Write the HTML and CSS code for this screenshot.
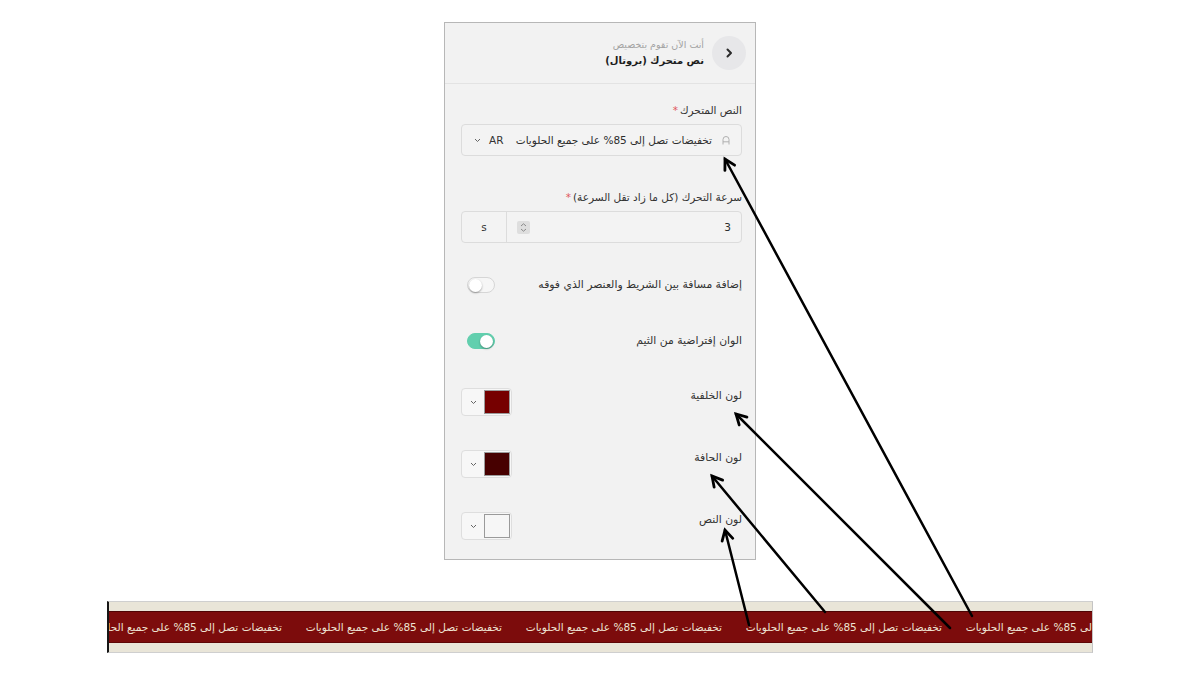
FILE: index.html
```html
<!DOCTYPE html>
<html lang="ar">
<head>
<meta charset="utf-8">
<title>نص متحرك</title>
<link rel="stylesheet" href="styles.css">
</head>
<body>
<div class="page">
  <aside class="panel" dir="rtl">
    <header class="panel-head">
      <button class="back" type="button" aria-label="رجوع">
        <svg width="12" height="12" viewBox="0 0 12 12"><path d="M4.5 2.5 L8 6 L4.5 9.5" fill="none" stroke="#2b2b2b" stroke-width="2" stroke-linecap="round" stroke-linejoin="round"/></svg>
      </button>
      <div class="head-text">
        <div class="head-sub">أنت الآن تقوم بتخصيص</div>
        <div class="head-title">نص متحرك (بروتال)</div>
      </div>
    </header>

    <div class="panel-body">
      <div class="field">
        <div class="lbl">النص المتحرك<span class="req">*</span></div>
        <div class="input">
          <svg class="a-ic" width="8" height="10" viewBox="0 0 8 10"><path d="M1 9.5 V4.5 A3 3 0 0 1 7 4.5 V9.5 M1 6.8 H7" fill="none" stroke="#b0b0b0" stroke-width="1"/></svg>
          <span class="input-val">تخفيضات تصل إلى 85% على جميع الحلويات</span>
          <span class="lang">AR
            <svg width="7" height="5" viewBox="0 0 7 5"><path d="M1 1 L3.5 3.5 L6 1" fill="none" stroke="#666" stroke-width="1"/></svg>
          </span>
        </div>
      </div>

      <div class="field f-speed">
        <div class="lbl">سرعة التحرك (كل ما زاد تقل السرعة)<span class="req">*</span></div>
        <div class="input num">
          <div class="num-main">
            <span class="num-val">3</span>
            <span class="spin">
              <svg width="13" height="13" viewBox="0 0 13 13"><path d="M4 5 L6.5 2.8 L9 5 M4 8 L6.5 10.2 L9 8" fill="none" stroke="#8a8a8a" stroke-width="1"/></svg>
            </span>
          </div>
          <div class="num-unit">s</div>
        </div>
      </div>

      <div class="row-toggle t1">
        <span class="rlbl">إضافة مسافة بين الشريط والعنصر الذي فوقه</span>
        <span class="toggle"><span class="knob"></span></span>
      </div>

      <div class="row-toggle t2">
        <span class="rlbl">الوان إفتراضية من الثيم</span>
        <span class="toggle on"><span class="knob"></span></span>
      </div>

      <div class="row-color c1">
        <span class="rlbl">لون الخلفية</span>
        <span class="picker">
          <span class="swatch" style="background:#760000"></span>
          <svg width="7" height="5" viewBox="0 0 7 5"><path d="M1 1 L3.5 3.5 L6 1" fill="none" stroke="#666" stroke-width="1"/></svg>
        </span>
      </div>

      <div class="row-color c2">
        <span class="rlbl">لون الحافة</span>
        <span class="picker">
          <span class="swatch" style="background:#470000"></span>
          <svg width="7" height="5" viewBox="0 0 7 5"><path d="M1 1 L3.5 3.5 L6 1" fill="none" stroke="#666" stroke-width="1"/></svg>
        </span>
      </div>

      <div class="row-color c3">
        <span class="rlbl">لون النص</span>
        <span class="picker">
          <span class="swatch" style="background:#f6f6f6"></span>
          <svg width="7" height="5" viewBox="0 0 7 5"><path d="M1 1 L3.5 3.5 L6 1" fill="none" stroke="#666" stroke-width="1"/></svg>
        </span>
      </div>
    </div>
  </aside>

  <section class="banner">
    <div class="band-light"></div>
    <div class="band">
      <div class="track">
        <span class="item" dir="rtl">تخفيضات تصل إلى 85% على جميع الحلويات</span>
        <span class="item" dir="rtl">تخفيضات تصل إلى 85% على جميع الحلويات</span>
        <span class="item" dir="rtl">تخفيضات تصل إلى 85% على جميع الحلويات</span>
        <span class="item" dir="rtl">تخفيضات تصل إلى 85% على جميع الحلويات</span>
        <span class="item" dir="rtl">تخفيضات تصل إلى 85% على جميع الحلويات</span>
      </div>
    </div>
    <div class="band-light"></div>
  </section>
</div>

<svg class="arrows" width="1200" height="675" viewBox="0 0 1200 675">
  <defs>
    <marker id="ah" markerUnits="userSpaceOnUse" markerWidth="16" markerHeight="16" refX="13" refY="8" orient="auto" viewBox="0 0 16 16">
      <path d="M3 2.5 L13 8 L3 13.5" fill="none" stroke="#000" stroke-width="2.8" stroke-linecap="round" stroke-linejoin="miter"/>
    </marker>
  </defs>
  <g stroke="#000" stroke-width="2.5" fill="none" stroke-linecap="round">
    <line x1="972" y1="616" x2="725" y2="159" marker-end="url(#ah)"/>
    <line x1="950" y1="628" x2="736" y2="414" marker-end="url(#ah)"/>
    <line x1="825" y1="612" x2="712" y2="476" marker-end="url(#ah)"/>
    <line x1="749" y1="625" x2="725" y2="530" marker-end="url(#ah)"/>
  </g>
</svg>
</body>
</html>
```

FILE: styles.css
```css
* { box-sizing: border-box; }

html, body {
  margin: 0;
  padding: 0;
  background: #ffffff;
}

body {
  width: 1200px;
  height: 675px;
  position: relative;
  overflow: hidden;
  font-family: "DejaVu Sans", "Noto Sans", sans-serif;
  color: #333;
}

.page {
  display: flex;
  flex-direction: column;
  align-items: flex-start;
  padding-top: 22px;
}

/* ---------- panel ---------- */
.panel {
  margin-left: 444px;
  width: 312px;
  height: 538px;
  border: 1px solid #b7b7b7;
  background: #f2f2f2;
  display: flex;
  flex-direction: column;
}

.panel-head {
  height: 61px;
  border-bottom: 1px solid #e3e3e3;
  display: flex;
  align-items: center;
  gap: 8px;
  padding-right: 9px;
}

.back {
  width: 34px;
  height: 34px;
  border-radius: 50%;
  border: 0;
  background: #e7e7e9;
  display: flex;
  align-items: center;
  justify-content: center;
  padding: 0;
}

.head-text {
  display: flex;
  flex-direction: column;
  gap: 3px;
}

.head-sub {
  font-size: 9.5px;
  line-height: 12px;
  color: #a3a3a3;
}

.head-title {
  font-size: 10px;
  line-height: 14px;
  font-weight: bold;
  color: #1d1d1d;
}

.panel-body {
  display: flex;
  flex-direction: column;
  padding: 18px 13px 0 16px;
}

.field {
  display: flex;
  flex-direction: column;
  gap: 6px;
}

.f-speed { margin-top: 33px; }

.lbl {
  font-size: 10.5px;
  line-height: 16px;
  color: #333;
}

.req {
  color: #e0565b;
  margin-right: 2px;
}

.input {
  height: 32px;
  border: 1px solid #dcdcdc;
  border-radius: 4px;
  background: #f3f3f3;
  display: flex;
  align-items: center;
  padding: 0 11px 0 12px;
}

.a-ic { flex: none; }

.input-val {
  margin-right: 10px;
  font-size: 10.5px;
  color: #2d2d2d;
  white-space: nowrap;
}

.lang {
  margin-right: auto;
  display: flex;
  align-items: center;
  gap: 8px;
  font-size: 10.5px;
  color: #333;
}

.input.num {
  padding: 0;
}

.num-main {
  flex: 1;
  height: 100%;
  display: flex;
  align-items: center;
  justify-content: space-between;
  padding: 0 10px 0 10px;
}

.num-val {
  font-size: 10.5px;
  color: #2d2d2d;
}

.spin {
  width: 13px;
  height: 13px;
  border-radius: 2px;
  background: #dedede;
  display: flex;
}

.num-unit {
  width: 45px;
  height: 100%;
  border-right: 1px solid #dcdcdc;
  display: flex;
  align-items: center;
  justify-content: center;
  font-size: 10.5px;
  color: #333;
}

/* ---------- toggles ---------- */
.row-toggle {
  height: 18px;
  display: flex;
  align-items: center;
  justify-content: space-between;
}

.t1 { margin-top: 33px; }
.t2 { margin-top: 38px; }

.rlbl {
  font-size: 10.8px;
  line-height: 16px;
  color: #333;
  white-space: nowrap;
}

.toggle {
  width: 28px;
  height: 16px;
  margin-left: 6px;
  border-radius: 8px;
  border: 1px solid #d6d6d6;
  background: #f6f6f6;
  display: flex;
  align-items: center;
  justify-content: flex-end;
  padding: 0 1px;
}

.toggle.on {
  background: #62cfae;
  border-color: #62cfae;
  justify-content: flex-start;
}

.knob {
  width: 13px;
  height: 13px;
  border-radius: 50%;
  background: #ffffff;
  box-shadow: 0 1px 2px rgba(0, 0, 0, 0.35);
}

/* ---------- color rows ---------- */
.row-color {
  height: 28px;
  display: flex;
  align-items: flex-start;
  justify-content: space-between;
}

.c1 { margin-top: 38px; }
.c2, .c3 { margin-top: 34px; }

.picker {
  width: 51px;
  height: 28px;
  border: 1px solid #dedede;
  border-radius: 4px;
  background: #f7f7f7;
  display: flex;
  align-items: center;
  justify-content: space-between;
  padding: 0 1px 0 8px;
}

.swatch {
  width: 26px;
  height: 24px;
  border: 1px solid #9a9a9a;
}

/* ---------- banner ---------- */
.banner {
  margin-top: 41px;
  margin-left: 107px;
  width: 986px;
  height: 52px;
  border-top: 1px solid #cfcfcf;
  border-bottom: 1px solid #cfcfcf;
  border-left: 2px solid #161616;
  border-right: 1px solid #c4c4c4;
  display: flex;
  flex-direction: column;
  background: #e9e5d8;
}

.band-light {
  height: 9px;
  background: #e9e5d8;
}

.band {
  height: 32px;
  background: #7c0c0c;
  border-top: 1px solid #4e0404;
  border-bottom: 1px solid #5e0606;
  overflow: hidden;
  display: flex;
  align-items: center;
}

.track {
  display: flex;
  gap: 28px;
  margin-left: -19px;
  flex: none;
}

.item {
  width: 192px;
  flex: none;
  text-align: center;
  white-space: nowrap;
  font-size: 10.5px;
  line-height: 14px;
  color: #efe4d3;
}

/* ---------- annotation arrows ---------- */
.arrows {
  position: absolute;
  left: 0;
  top: 0;
  pointer-events: none;
}
```
